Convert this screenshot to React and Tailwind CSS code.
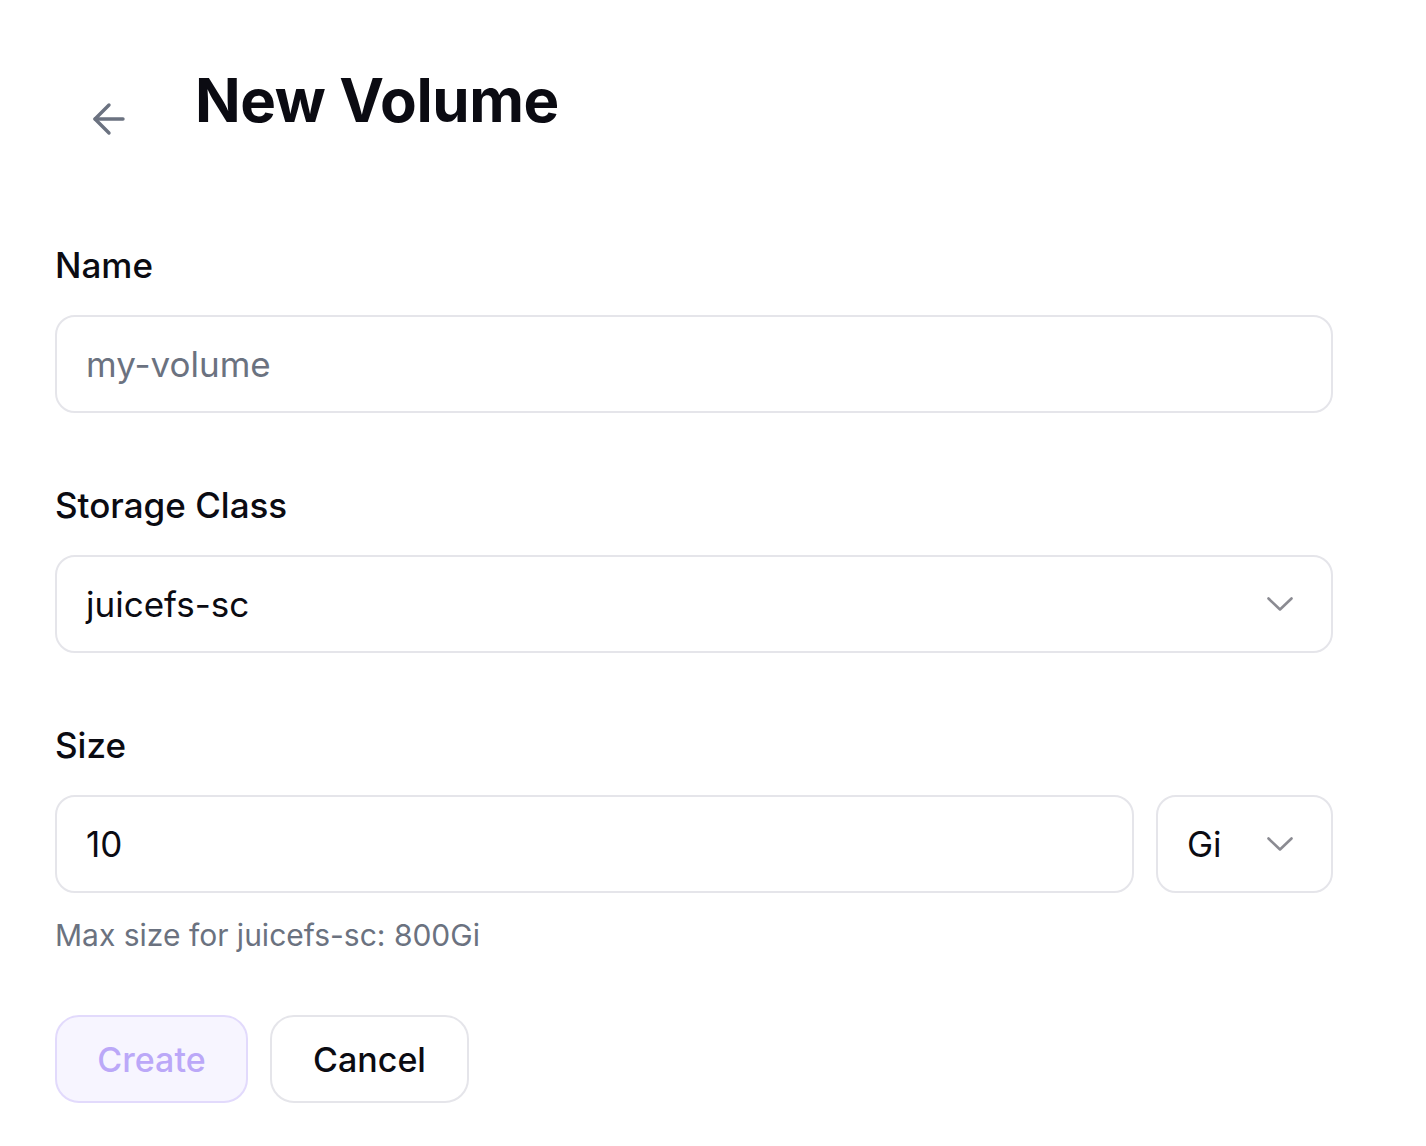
import React from "react";

function Chevron() {
  return (
    <svg width="26" height="15" viewBox="0 0 26 15" fill="none" className="shrink-0">
      <path d="M1.5 1.5 L13 12.5 L24.5 1.5" stroke="#8b8b92" strokeWidth="2.6" strokeLinecap="round" strokeLinejoin="round" />
    </svg>
  );
}

function ArrowLeft() {
  return (
    <svg width="48" height="48" viewBox="0 0 24 24" fill="none" stroke="#6b7280" strokeWidth="1.7" strokeLinecap="round" strokeLinejoin="round">
      <path d="m12 19-7-7 7-7" />
      <path d="M19 12H5" />
    </svg>
  );
}

export default function App() {
  return (
    <div className="min-h-screen bg-white pl-[55px] pt-[64px] font-['Inter','Noto_Sans',sans-serif] text-[#0b0b12]">
      <div className="w-[1278px]">
        <div className="flex items-start">
          <button className="ml-[30px] mt-[31px] h-[48px] w-[48px] flex items-center justify-center">
            <ArrowLeft />
          </button>
          <h1 className="ml-[62px] text-[60px] leading-[72px] font-bold tracking-[-0.4px]">New Volume</h1>
        </div>

        <div className="mt-[98px] flex flex-col">
          <label className="text-[35px] leading-[48px] font-medium">Name</label>
          <div className="mt-[26px] h-[98px] rounded-[20px] border-2 border-[#e5e5ea] flex items-center pl-[29px] pr-[31px]">
            <span className="text-[35px] text-[#6b7280]">my-volume</span>
          </div>
        </div>

        <div className="mt-[68px] flex flex-col">
          <label className="text-[35px] leading-[48px] font-medium">Storage Class</label>
          <div className="mt-[26px] h-[98px] rounded-[20px] border-2 border-[#e5e5ea] flex items-center justify-between pl-[29px] pr-[38px]">
            <span className="text-[35px]">juicefs-sc</span>
            <Chevron />
          </div>
        </div>

        <div className="mt-[68px] flex flex-col">
          <label className="text-[35px] leading-[48px] font-medium">Size</label>
          <div className="mt-[26px] flex gap-[22px]">
            <div className="flex-1 h-[98px] rounded-[20px] border-2 border-[#e5e5ea] flex items-center px-[29px]">
              <span className="text-[35px]">10</span>
            </div>
            <div className="w-[177px] h-[98px] rounded-[20px] border-2 border-[#e5e5ea] flex items-center justify-between pl-[29px] pr-[38px]">
              <span className="text-[35px]">Gi</span>
              <Chevron />
            </div>
          </div>
          <p className="mt-[22px] text-[30px] leading-[40px] text-[#6b7280]">Max size for juicefs-sc: 800Gi</p>
        </div>

        <div className="mt-[60px] flex gap-[22px]">
          <button className="h-[88px] w-[193px] rounded-[24px] border-2 border-[#e2dafc] bg-[#f7f5ff] text-[34px] font-medium text-[#bba8f8]">
            Create
          </button>
          <button className="h-[88px] w-[199px] rounded-[24px] border-2 border-[#e5e5ea] bg-white text-[34px] font-medium text-[#0b0b12]">
            Cancel
          </button>
        </div>
      </div>
    </div>
  );
}
